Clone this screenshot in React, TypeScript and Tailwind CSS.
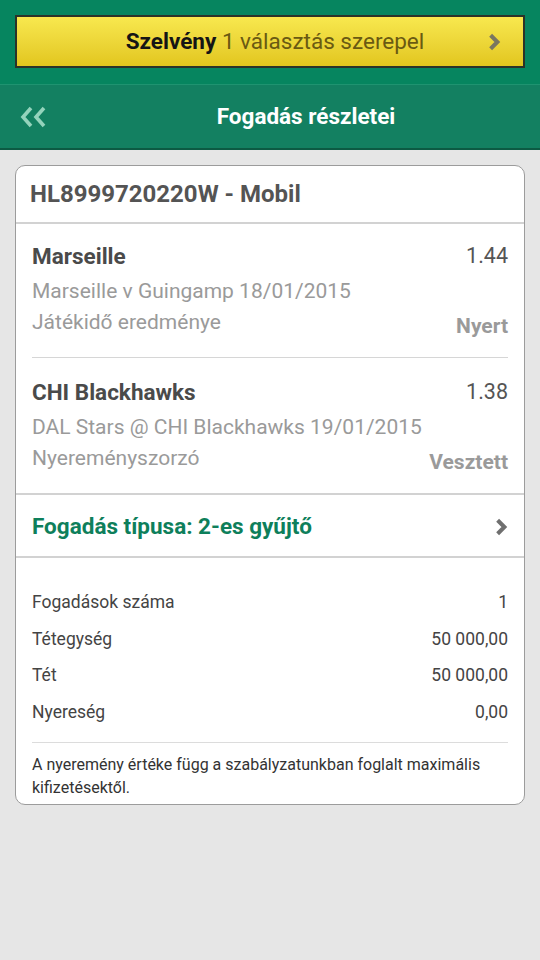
const font = { fontFamily: "Roboto, 'Noto Sans', sans-serif" };

const Chevron = ({ className }: { className: string }) => (
  <svg viewBox="0 0 12 16" className={className}>
    <polyline points="3,2 9,8 3,14" fill="none" stroke="currentColor" strokeWidth="3.6" strokeLinejoin="miter" />
  </svg>
);

const selections = [
  {
    name: "Marseille",
    odds: "1.44",
    event: "Marseille v Guingamp 18/01/2015",
    market: "Játékidő eredménye",
    result: "Nyert",
  },
  {
    name: "CHI Blackhawks",
    odds: "1.38",
    event: "DAL Stars @ CHI Blackhawks 19/01/2015",
    market: "Nyereményszorzó",
    result: "Vesztett",
  },
];

const summary = [
  { label: "Fogadások száma", value: "1" },
  { label: "Tétegység", value: "50 000,00" },
  { label: "Tét", value: "50 000,00" },
  { label: "Nyereség", value: "0,00" },
];

export default function App() {
  return (
    <div className="min-h-screen bg-[#e6e6e6]" style={font}>
      <div className="bg-[#06855f] px-[15px] pt-[15px] pb-[16px]">
        <div className="relative flex h-[53px] items-center justify-center border-2 border-[#2b3328] bg-gradient-to-b from-[#f8e84e] to-[#e2c61c]">
          <span className="ml-[10px] text-[22.5px] text-[#6a5a12]">
            <b className="font-bold text-[#151515]">Szelvény</b> 1 választás szerepel
          </span>
          <Chevron className="absolute right-[22px] h-[18px] w-[14px] text-[#7a7660]" />
        </div>
      </div>
      <div className="relative flex h-[66px] items-center justify-center border-t border-[#1f9370] border-b-2 border-b-[#0c5a43] bg-[#138061] pl-[72px]">
        <svg viewBox="0 0 30 24" className="absolute left-[19px] h-[24px] w-[30px] text-[#94d3bc]">
          <polyline points="12,3 4,12 12,21" fill="none" stroke="currentColor" strokeWidth="3.6" />
          <polyline points="25,3 17,12 25,21" fill="none" stroke="currentColor" strokeWidth="3.6" />
        </svg>
        <h1 className="text-[22.5px] font-bold text-white">Fogadás részletei</h1>
      </div>

      <div className="mx-[15px] mt-[15px] rounded-[10px] border border-[#9c9c9c] bg-white">
        <div className="flex h-[58px] items-center border-b-2 border-[#d2d2d2] px-[14px]">
          <h2 className="text-[24px] font-bold text-[#545454]">HL8999720220W - Mobil</h2>
        </div>

        {selections.map((s, i) => (
          <div
            key={i}
            className={
              i === 0
                ? "mx-[16px] border-b border-[#d6d6d6] pt-[18px]"
                : "border-b-2 border-[#d2d2d2] px-[16px] pt-[20px]"
            }
          >
            <div className="flex justify-between leading-[28px]">
              <span className="text-[22.5px] font-bold text-[#4a4a4a]">{s.name}</span>
              <span className="text-[21.5px] text-[#555]">{s.odds}</span>
            </div>
            <div className="mt-[7px] text-[21px] leading-[28px] text-[#9a9a9a]">{s.event}</div>
            <div className="mt-[3px] flex items-start justify-between pb-[17px] leading-[28px] text-[#9a9a9a]">
              <span className="text-[21px]">{s.market}</span>
              <span className="pt-[4px] text-[21px] font-bold">{s.result}</span>
            </div>
          </div>
        ))}

        <div className="flex h-[63px] items-center justify-between border-b-2 border-[#d2d2d2] px-[16px] pt-[2px]">
          <span className="text-[22.5px] font-bold text-[#0e7f5b]">Fogadás típusa: 2-es gyűjtő</span>
          <Chevron className="h-[18px] w-[14px] text-[#6f6f6f]" />
        </div>

        <div className="px-[16px] pt-[26px]">
          {summary.map((r) => (
            <div key={r.label} className="flex justify-between text-[17.5px] leading-[36.5px] text-[#444]">
              <span>{r.label}</span>
              <span>{r.value}</span>
            </div>
          ))}
          <div className="mt-[12px] border-t border-[#dcdcdc] pt-[10px] pb-[5px] text-[16px] leading-[23px] text-[#333]">
            A nyeremény értéke függ a szabályzatunkban foglalt maximális kifizetésektől.
          </div>
        </div>
      </div>
    </div>
  );
}
